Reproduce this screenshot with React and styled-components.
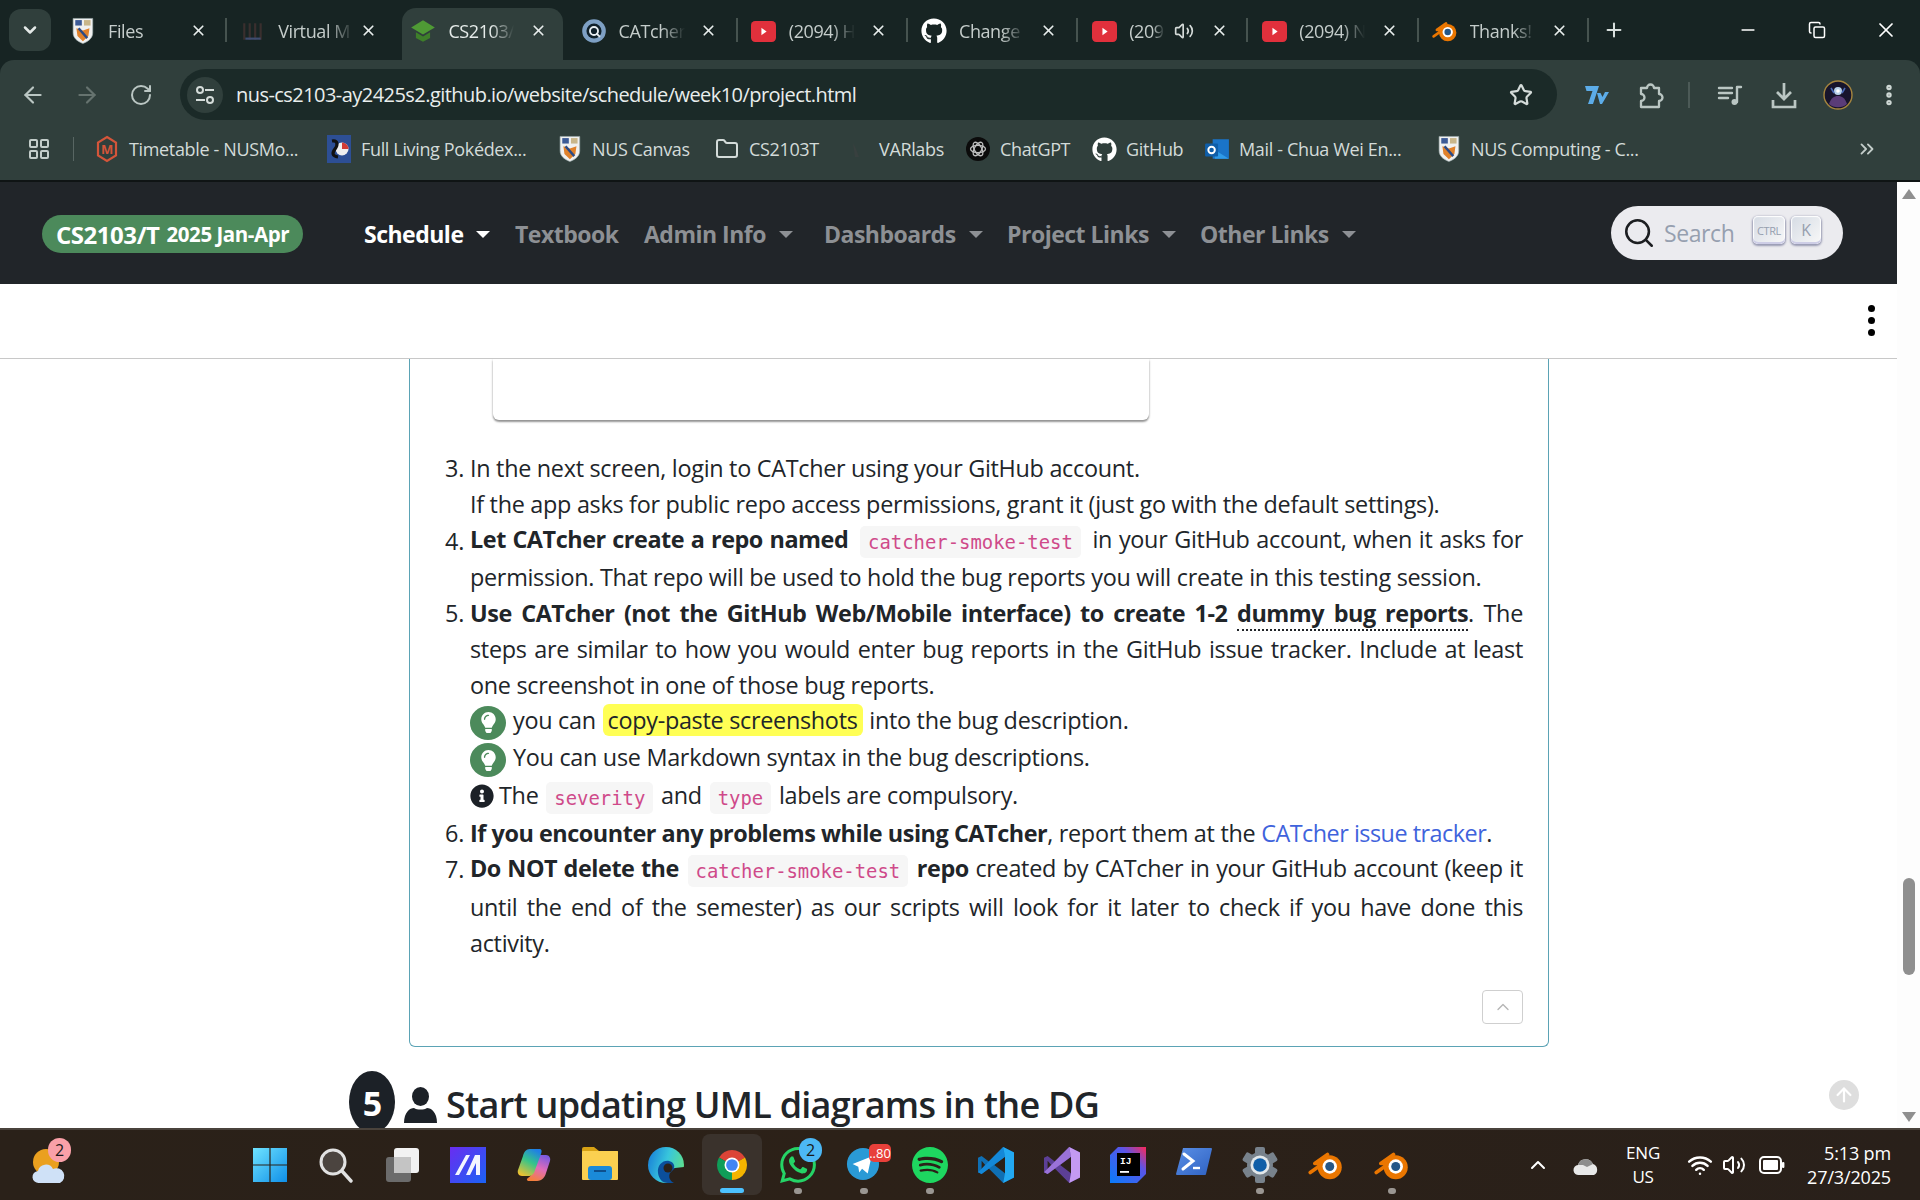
import React from 'react';
import styled, { createGlobalStyle } from 'styled-components';
import { ArrowLeft, ArrowRight, RotateCw, Star, X, Plus, Minus, ChevronDown, ChevronUp, ChevronsRight, EllipsisVertical, Folder, LayoutGrid, Search as SearchGlyph, Volume2, Wifi, ArrowUp, Copy } from 'lucide-react';
import { FaGithub, FaInfoCircle, FaLightbulb } from 'react-icons/fa';
import { SiSpotify, SiWhatsapp } from 'react-icons/si';

const UI_FONT = `"Open Sans", "Noto Sans", sans-serif`;

const GlobalStyle = createGlobalStyle`
    html, body {
        margin: 0;
        width: 1920px;
        height: 1200px;
        overflow: hidden;
        background: #fff;
        font-family: ${UI_FONT};
    }
    * { box-sizing: border-box; }
    svg { flex: none; }
`;

const Screen = styled.div`
    width: 1920px;
    height: 1200px;
    display: flex;
    flex-direction: column;
    overflow: hidden;
`;

/* ---------- browser chrome ---------- */
const Chrome = styled.div`
    height: 182px;
    flex: none;
    background: #172423;
    border-bottom: 2px solid #0f1414;
`;
const TabStrip = styled.div`
    height: 60px;
    display: flex;
    align-items: flex-start;
    padding-left: 9px;
`;
const TabSearch = styled.div`
    width: 42px;
    height: 42px;
    margin: 9px 6px 0 0;
    border-radius: 12px;
    background: #303f3c;
    color: #e4eae8;
    display: flex;
    align-items: center;
    justify-content: center;
`;
const Tab = styled.div`
    position: relative;
    width: 170.2px;
    height: 52px;
    margin-top: 8px;
    flex: none;
    display: flex;
    align-items: center;
    padding: 0 0 6px 17px;
    color: ${p => (p.$active ? '#e6ecea' : '#c5cdcb')};
    &::before {
        content: '';
        display: ${p => (p.$active ? 'block' : 'none')};
        position: absolute;
        left: 5px;
        right: 5px;
        top: 0;
        bottom: 0;
        background: #303f3c;
        border-radius: 14px 14px 0 0;
    }
    &::after {
        content: '';
        display: ${p => (p.$sep ? 'block' : 'none')};
        position: absolute;
        right: 0;
        top: 10px;
        width: 2px;
        height: 24px;
        background: #46534f;
    }
`;
const TabIcon = styled.span`
    position: relative;
    width: 18px;
    height: 24px;
    flex: none;
    display: flex;
    align-items: center;
    justify-content: center;
`;
const TabTitle = styled.span`
    position: relative;
    width: ${p => p.$w || 66}px;
    margin-left: 16px;
    flex: none;
    overflow: hidden;
    white-space: nowrap;
    font-size: 18px;
    letter-spacing: -0.4px;
    -webkit-mask-image: linear-gradient(90deg, #000 65%, transparent);
    mask-image: linear-gradient(90deg, #000 65%, transparent);
`;
const TabClose = styled.span`
    position: absolute;
    left: 131px;
    top: 12px;
    width: 20px;
    height: 20px;
    color: #e8edec;
    display: flex;
    align-items: center;
    justify-content: center;
`;
const TabAudio = styled.span`
    position: relative;
    margin-left: 9px;
    color: #d5dbd9;
    display: flex;
`;
const NewTab = styled.div`
    width: 30px;
    height: 60px;
    margin-left: 10px;
    color: #d8dfdd;
    display: flex;
    align-items: center;
    justify-content: center;
`;
const WindowButtons = styled.div`
    margin-left: auto;
    display: flex;
`;
const WindowButton = styled.div`
    width: 69px;
    height: 60px;
    color: #fff;
    display: flex;
    align-items: center;
    justify-content: center;
`;
const Toolbar = styled.div`
    background: #303f3c;
    border-radius: 14px 14px 0 0;
    height: 60px;
    display: flex;
    align-items: flex-start;
    padding-left: 6px;
`;
const ToolButton = styled.div`
    width: 54px;
    height: 51px;
    margin-top: 9px;
    flex: none;
    color: ${p => p.$color || '#bac6c3'};
    display: flex;
    align-items: center;
    justify-content: center;
`;
const MenuButton = styled(ToolButton)`
    margin-left: -3px;
`;
const NavGroup = styled.div`
    display: flex;
`;
const AddressBar = styled.div`
    width: 1377px;
    height: 51px;
    margin: 9px 13px 0 12px;
    flex: none;
    border-radius: 26px;
    background: #1b2a28;
    display: flex;
    align-items: center;
    padding-left: 7px;
`;
const SiteInfo = styled.div`
    width: 36px;
    height: 36px;
    border-radius: 50%;
    background: #303f3c;
    display: flex;
    align-items: center;
    justify-content: center;
`;
const Url = styled.span`
    margin-left: 13px;
    font-size: 20px;
    letter-spacing: -0.55px;
    color: #e9eeed;
    white-space: nowrap;
`;
const AddressStar = styled.div`
    margin-left: auto;
    margin-right: 24px;
    color: #d5dcda;
    display: flex;
`;
const ToolDivider = styled.div`
    width: 2px;
    height: 26px;
    margin: 22px 13px 0 10px;
    background: #4c5a57;
`;
const Bookmarks = styled.div`
    background: #303f3c;
    height: 60px;
    display: flex;
    align-items: center;
    padding: 0 0 2px 27px;
    position: relative;
`;
const AppsIcon = styled.div`
    width: 24px;
    color: #c3cdca;
    display: flex;
`;
const BookmarkDivider = styled.div`
    width: 1px;
    height: 24px;
    margin: 0 21px 0 22px;
    background: #586663;
`;
const Bookmark = styled.div`
    width: ${p => p.$w}px;
    flex: none;
    display: flex;
    align-items: center;
    gap: 10px;
    color: #d3dbd9;
    font-size: 18px;
    letter-spacing: -0.35px;
    white-space: nowrap;
`;
const BookmarkIcon = styled.span`
    width: 24px;
    height: 24px;
    flex: none;
    display: flex;
    align-items: center;
    justify-content: center;
`;
const MoreBookmarks = styled.div`
    margin-left: auto;
    margin-right: 42px;
    color: #c3cdca;
    display: flex;
`;

/* ---------- page ---------- */
const Body = styled.div`
    flex: 1;
    min-height: 0;
    display: flex;
`;
const Page = styled.div`
    position: relative;
    flex: 1;
    min-width: 0;
    display: flex;
    flex-direction: column;
`;
const Navbar = styled.nav`
    height: 102px;
    flex: none;
    background: #212529;
    display: flex;
    align-items: center;
    padding-left: 42px;
`;
const Brand = styled.div`
    width: 261px;
    height: 38px;
    margin-right: 61px;
    margin-top: 2px;
    flex: none;
    border-radius: 19px;
    background: #4c8a5b;
    color: #fff;
    font-weight: 700;
    font-size: 24px;
    letter-spacing: -0.45px;
    display: flex;
    align-items: center;
    justify-content: center;
    white-space: nowrap;
`;
const BrandSmall = styled.span`
    font-size: 20.5px;
    margin-left: 7px;
    letter-spacing: -0.45px;
`;
const NavItem = styled.div`
    width: ${p => p.$w}px;
    flex: none;
    display: flex;
    align-items: center;
    margin-top: 2px;
    font-size: 23px;
    font-weight: 700;
    letter-spacing: -0.5px;
    color: ${p => (p.$active ? '#fff' : '#8d9094')};
    white-space: nowrap;
`;
const Caret = styled.span`
    margin-left: 13px;
    width: 0;
    height: 0;
    border-left: 7px solid transparent;
    border-right: 7px solid transparent;
    border-top: 7px solid currentColor;
`;
const SearchPill = styled.div`
    margin-left: auto;
    margin-right: 54px;
    width: 232px;
    height: 54px;
    flex: none;
    border-radius: 27px;
    background: #ebebef;
    display: flex;
    align-items: center;
    padding-left: 11px;
    color: #969faf;
    font-size: 23px;
    letter-spacing: -0.4px;
`;
const SearchLabel = styled.span`
    margin-left: 8px;
    margin-right: 16px;
    width: 73px;
`;
const Key = styled.span`
    width: ${p => p.$w}px;
    height: 28px;
    margin-right: 6px;
    margin-top: -6px;
    border-radius: 5px;
    background: linear-gradient(-225deg, #d5dbe4, #f8f8f8);
    box-shadow: inset 0 -2px 0 0 #cdcde6, inset 0 0 1px 1px #fff, 0 1px 2px 1px rgba(30, 35, 90, 0.4);
    color: #969faf;
    font-size: ${p => p.$size}px;
    display: flex;
    align-items: center;
    justify-content: center;
`;
const SubBar = styled.div`
    height: 75px;
    flex: none;
    background: #fff;
    border-bottom: 1px solid #c8c8c8;
    display: flex;
    align-items: center;
    justify-content: flex-end;
    padding-right: 22px;
`;
const KebabDots = styled.div`
    display: flex;
    flex-direction: column;
    gap: 5px;
    margin-top: -2px;
`;
const KebabDot = styled.span`
    width: 7px;
    height: 7px;
    border-radius: 50%;
    background: #000;
`;
const Content = styled.div`
    flex: 1;
    min-height: 0;
    overflow: hidden;
    padding-left: 409px;
    color: #212529;
`;
const Panel = styled.section`
    width: 1140px;
    border: 1px solid #5ba3b5;
    border-top: 0;
    border-radius: 0 0 6px 6px;
    padding-right: 25px;
    display: flex;
    flex-direction: column;
`;
const ScreenshotCard = styled.div`
    width: 656px;
    height: 61px;
    margin-left: 83px;
    flex: none;
    border-radius: 0 0 6px 6px;
    background: #fff;
    box-shadow: 0 2px 2px rgba(0, 0, 0, 0.4), 0 0 3px rgba(0, 0, 0, 0.12);
`;
const Steps = styled.div`
    margin-top: 30px;
    display: flex;
    flex-direction: column;
`;
const Line = styled.div`
    display: flex;
    height: ${p => p.$h || 36.2}px;
    align-items: center;
    font-size: 23.4px;
    letter-spacing: -0.29px;
    white-space: nowrap;
`;
const Num = styled.span`
    width: 60px;
    flex: none;
    text-align: right;
    padding-right: 6px;
`;
const LineText = styled.div`
    flex: 1;
    min-width: 0;
    text-align: ${p => (p.$fill ? 'justify' : 'left')};
    text-align-last: ${p => (p.$fill ? 'justify' : 'left')};
    white-space: normal;
`;
const Strong = styled.b`
    font-weight: 700;
    letter-spacing: -0.45px;
`;
const Dotted = styled(Strong)`
    border-bottom: 2px dotted #212529;
`;
const Code = styled.code`
    display: inline-block;
    height: 32px;
    line-height: 32px;
    vertical-align: middle;
    margin: 0 ${p => (p.$tight ? 2 : 5)}px;
    padding: 0 8px;
    border-radius: 5px;
    background: #f6f6f6;
    color: #cf4a8a;
    font-family: "DejaVu Sans Mono", monospace;
    font-size: 18.9px;
    letter-spacing: 0;
`;
const Mark = styled.mark`
    display: inline-block;
    height: 32px;
    line-height: 32px;
    margin: 0 1px;
    padding: 0 5px;
    border-radius: 6px;
    background: #ffff55;
    color: #212529;
`;
const Tip = styled.span`
    display: inline-flex;
    vertical-align: middle;
    width: 36px;
    height: 34px;
    margin-right: 7px;
    border-radius: 50%;
    background: #4c8a5b;
    color: #fff;
    align-items: center;
    justify-content: center;
`;
const Info = styled.span`
    display: inline-flex;
    vertical-align: middle;
    margin-right: 5px;
    margin-top: -4px;
    color: #1c2127;
`;
const TrackerLink = styled.a`
    color: #3f63dc;
    letter-spacing: -0.5px;
`;
const CollapseButton = styled.div`
    width: 41px;
    height: 34px;
    margin: 29px 0 22px auto;
    flex: none;
    border: 1px solid #cfcfcf;
    border-radius: 4px;
    color: #b5b5b5;
    display: flex;
    align-items: center;
    justify-content: center;
`;
const StepHeading = styled.h2`
    margin: 24px 0 0 -60px;
    display: flex;
    align-items: flex-start;
    font-size: 36px;
    font-weight: 600;
    letter-spacing: -0.75px;
    line-height: 46px;
    white-space: nowrap;
`;
const StepBadge = styled.span`
    width: 46px;
    height: 62px;
    flex: none;
    border-radius: 50%;
    background: #1c2127;
    color: #fff;
    font-size: 34px;
    font-weight: 700;
    line-height: 64px;
    text-align: center;
`;
const StepPerson = styled.span`
    margin: 16px 9px 0 9px;
    display: flex;
    color: #1c2127;
`;
const StepTitle = styled.span`
    margin-top: 11px;
`;
const ScrollTop = styled.div`
    position: absolute;
    right: 38px;
    bottom: 18px;
    width: 30px;
    height: 30px;
    border-radius: 50%;
    background: #dedede;
    color: #fff;
    display: flex;
    align-items: center;
    justify-content: center;
`;
const Scrollbar = styled.div`
    width: 23px;
    flex: none;
    background: #fdfdfd;
    display: flex;
    flex-direction: column;
    align-items: center;
    padding: 7px 0 6px;
`;
const ArrowCap = styled.span`
    width: 0;
    height: 0;
    border-left: 7px solid transparent;
    border-right: 7px solid transparent;
    ${p => (p.$down ? 'border-top: 10px solid #8f8f8f; margin-top: auto;' : 'border-bottom: 10px solid #8f8f8f;')}
`;
const Thumb = styled.span`
    width: 12px;
    height: 97px;
    margin-top: 679px;
    border-radius: 6px;
    background: #8f8f8f;
`;

/* ---------- taskbar ---------- */
const Taskbar = styled.footer`
    height: 72px;
    flex: none;
    background: linear-gradient(90deg, #2a2119, #2c2118 45%, #29201a);
    border-top: 2px solid #4a433c;
    display: flex;
    align-items: center;
    color: #fff;
`;
const WeatherSlot = styled.div`
    width: 237px;
    flex: none;
    padding-left: 31px;
`;
const IconWrap = styled.div`
    position: relative;
    width: 36px;
    height: 36px;
`;
const Badge = styled.span`
    position: absolute;
    top: ${p => (p.$top === undefined ? -9 : p.$top)}px;
    right: ${p => p.$right || -6}px;
    min-width: ${p => p.$w || 23}px;
    height: ${p => p.$h || 24}px;
    border-radius: ${p => p.$radius || 12}px;
    background: ${p => p.$bg};
    color: ${p => p.$fg || '#1a1a1a'};
    font-size: ${p => p.$size || 16}px;
    text-align: center;
    line-height: ${p => p.$h || 24}px;
`;
const AppSlot = styled.div`
    position: relative;
    width: 66px;
    height: 70px;
    flex: none;
    display: flex;
    align-items: center;
    justify-content: center;
    &::before {
        content: '';
        display: ${p => (p.$active ? 'block' : 'none')};
        position: absolute;
        left: 3px;
        right: 3px;
        top: 4px;
        bottom: 5px;
        border-radius: 8px;
        background: #3a322c;
    }
    &::after {
        content: '';
        position: absolute;
        display: ${p => (p.$dot || p.$active ? 'block' : 'none')};
        bottom: ${p => (p.$active ? 7 : 6)}px;
        left: 50%;
        transform: translateX(-50%);
        width: ${p => (p.$active ? 24 : 8)}px;
        height: ${p => (p.$active ? 5 : 6)}px;
        border-radius: 4px;
        background: ${p => (p.$active ? '#4cc2ff' : '#9a9692')};
    }
`;
const Tray = styled.div`
    margin-left: auto;
    padding-right: 29px;
    display: flex;
    align-items: center;
`;
const TrayIcon = styled.div`
    width: ${p => p.$w}px;
    display: flex;
    justify-content: center;
    color: #fff;
`;
const TwoLines = styled.div`
    display: flex;
    flex-direction: column;
    gap: 4px;
    align-items: ${p => p.$align};
    font-size: 18px;
    line-height: 20px;
    letter-spacing: -0.15px;
    white-space: nowrap;
`;
const LangBlock = styled(TwoLines)`
    width: 66px;
    font-size: 17px;
`;
const ClockBlock = styled(TwoLines)`
    margin-left: 7px;
`;

/* ---------- drawn icons ---------- */
const Crest = ({ size = 28 }) => (
    <svg width={size * 0.78} height={size} viewBox="0 0 20 25">
        <path d="M1 1h18v13c0 5-4 8-9 10-5-2-9-5-9-10z" fill="#f0f0f0" stroke="#9aa" strokeWidth=".6" />
        <rect x="3" y="2.500" width="6" height="5" fill="#3c5a96" />
        <rect x="11" y="2.500" width="6" height="5" fill="#c9b68a" />
        <path d="M4 10l6 2 6-2-1 7-5 5-5-5z" fill="#e0812b" />
        <path d="M6 10l8 9" stroke="#2b4a86" strokeWidth="2.2" />
    </svg>
);
const Mortarboard = () => (
    <svg width="26" height="26" viewBox="0 0 22 22">
        <path d="M11 2l10 6-10 6L1 8z" fill="#4f9a35" />
        <path d="M5 12v5l6 3 6-3v-5l-6 3.600z" fill="#3e7f2a" />
    </svg>
);
const CatcherMark = () => (
    <svg width="26" height="26" viewBox="0 0 22 22">
        <circle cx="11" cy="11" r="10" fill="#7ea0c4" />
        <circle cx="11" cy="11" r="6.400" fill="#10202a" />
        <circle cx="11" cy="11" r="3.400" fill="none" stroke="#e8eef2" strokeWidth="1.600" />
        <path d="M13 13l3 3" stroke="#e8eef2" strokeWidth="1.600" />
    </svg>
);
const YoutubeMark = () => (
    <svg width="25" height="25" viewBox="0 0 24 24">
        <rect y="2" width="24" height="20" rx="4" fill="#e1303c" />
        <path d="M10 8.500l5 3.500-5 3.500z" fill="#fff" />
    </svg>
);
const BlenderMark = ({ size = 26 }) => (
    <svg width={size} height={size} viewBox="0 0 24 24">
        <path d="M1.500 17L10 11H4.500L13 5" stroke="#ea7600" strokeWidth="2.400" fill="none" strokeLinecap="round" strokeLinejoin="round" />
        <circle cx="14.500" cy="13.500" r="8" fill="#ea7600" />
        <circle cx="14.500" cy="13" r="4.800" fill="#fff" />
        <circle cx="14.500" cy="13" r="3" fill="#265787" />
    </svg>
);
const VirtualMark = () => (
    <svg width="24" height="24" viewBox="0 0 22 22">
        <path d="M2 4h2v15H2zM7 4h2v15H7zM12 4h2v15h-2zM17 4h2v15h-2z" fill="#3a2f2e" />
        <path d="M4 17h14v2H4z" fill="#3f4d70" />
    </svg>
);
const SiteInfoMark = () => (
    <svg width="22" height="22" viewBox="0 0 22 22" fill="none" stroke="#d5dcda" strokeWidth="2">
        <circle cx="6" cy="6" r="3" />
        <path d="M11 6h9" />
        <circle cx="16" cy="16" r="3" />
        <path d="M2 16h9" />
    </svg>
);
const NusModsMark = () => (
    <svg width="24" height="28" viewBox="0 0 24 28">
        <path d="M12 2l9 5.500v13L12 26l-9-5.500v-13z" fill="none" stroke="#d4553a" strokeWidth="2.200" />
        <text x="12" y="19" textAnchor="middle" fontSize="13" fontWeight="700" fill="#d4553a" fontFamily="Open Sans">M</text>
    </svg>
);
const PokedexMark = () => (
    <svg width="24" height="28" viewBox="0 0 24 28">
        <rect width="24" height="28" fill="#2d4f95" />
        <circle cx="15" cy="14" r="6.500" fill="#efefef" />
        <path d="M15 7.500a6.500 6.500 0 0 1 6.500 6.500H15z" fill="#d13b35" />
        <path d="M5 6c6-1 6 4 3 8s-3 7 3 8" stroke="#111" strokeWidth="3.200" fill="none" />
    </svg>
);
const VarlabsMark = () => (
    <svg width="24" height="24" viewBox="0 0 24 24">
        <path d="M8 6l2 14h4l-3-8z" fill="#38403f" />
    </svg>
);
const GptMark = () => (
    <svg width="24" height="26" viewBox="0 0 24 24">
        <circle cx="12" cy="12" r="12" fill="#0b0b0b" />
        {[0, 60, 120].map(a => (
            <ellipse key={a} cx="12" cy="12" rx="7.500" ry="3.600" fill="none" stroke="#bdbdbd" strokeWidth="1.300" transform={`rotate(${a} 12 12)`} />
        ))}
    </svg>
);
const OutlookMark = () => (
    <svg width="26" height="28" viewBox="0 0 24 24">
        <path d="M8 3h15v18H8z" fill="#1a74c8" />
        <path d="M10 13l13 8H10z" fill="#2f9be8" />
        <rect x="1" y="7" width="12" height="12" rx="1" fill="#0f5ea8" />
        <circle cx="7" cy="13" r="3" fill="none" stroke="#fff" strokeWidth="1.800" />
    </svg>
);
const SevenMark = () => (
    <svg width="24" height="18" viewBox="0 0 24 18">
        <path d="M0 0h14l-6 18H3L7.500 5H1.500z" fill="#5cace8" />
        <path d="M12 7h3.500l2 4 2.500-5h4L17 18h-2z" fill="#5cace8" />
    </svg>
);
const PuzzleMark = () => (
    <svg width="26" height="28" viewBox="0 0 26 28" fill="none" stroke="#bac6c3" strokeWidth="2.300" strokeLinejoin="round">
        <path d="M3 7h6a3.500 3.500 0 0 1 7 0h5v6a3.500 3.500 0 0 1 0 7v6H3v-6a3.500 3.500 0 0 0 0-7z" />
    </svg>
);
const MediaMark = () => (
    <svg width="26" height="26" viewBox="0 0 26 26" fill="none" stroke="#bac6c3" strokeWidth="2.400" strokeLinecap="round">
        <path d="M2 6h13M2 11h13M2 16h9" />
        <path d="M20 5h4M20 5v15" />
        <circle cx="17.500" cy="20" r="3" fill="#bac6c3" stroke="none" />
    </svg>
);
const DownloadMark = () => (
    <svg width="26" height="28" viewBox="0 0 26 28" fill="none" stroke="#bac6c3" strokeWidth="2.700">
        <path d="M13 2v15M6 11l7 7 7-7" />
        <path d="M2 19v7h22v-7" />
    </svg>
);
const AvatarMark = () => (
    <svg width="30" height="30" viewBox="0 0 30 30">
        <circle cx="15" cy="15" r="14" fill="#17142c" stroke="#a5853e" strokeWidth="1.400" />
        <path d="M6 24c2-6 5-8 9-8s7 2 9 8a14 14 0 0 1-18 0z" fill="#5a3c78" />
        <circle cx="15" cy="11" r="4" fill="#b9d2ea" />
        <circle cx="15" cy="11" r="1.800" fill="#fff" />
        <path d="M8 8l3 5M22 8l-3 5" stroke="#4a6ab8" strokeWidth="1.600" />
    </svg>
);
const PersonMark = () => (
    <svg width="33" height="36" viewBox="0 0 33 36">
        <ellipse cx="16.500" cy="9.500" rx="8.500" ry="9.500" fill="currentColor" />
        <path d="M0 36c0-11 6-15 10-15 3 2 10 2 13 0 4 0 10 4 10 15z" fill="currentColor" />
    </svg>
);
const WeatherMark = () => (
    <svg width="36" height="38" viewBox="0 0 36 38">
        <circle cx="15" cy="15" r="13" fill="#eaa01f" />
        <path d="M8 36a6 6 0 0 1-1-12 8 8 0 0 1 15-2 7 7 0 0 1 7 14z" fill="#cfe1f7" />
    </svg>
);
const WindowsMark = () => (
    <svg width="36" height="36" viewBox="0 0 36 36">
        <defs>
            <linearGradient id="win" x1="0" y1="0" x2="1" y2="1">
                <stop offset="0" stopColor="#6fe3ff" />
                <stop offset="1" stopColor="#0f8fe8" />
            </linearGradient>
        </defs>
        <path d="M1 1h16.400v16.400H1zM18.600 1H35v16.400H18.600zM1 18.600h16.400V35H1zM18.600 18.600H35V35H18.600z" fill="url(#win)" />
    </svg>
);
const TaskSearchMark = () => (
    <svg width="36" height="36" viewBox="0 0 36 36">
        <circle cx="15" cy="15" r="12" fill="#4b443f" stroke="#e2e2e2" strokeWidth="3" />
        <path d="M24 24l9 10" stroke="#e2e2e2" strokeWidth="3.400" strokeLinecap="round" />
    </svg>
);
const TaskViewMark = () => (
    <svg width="36" height="36" viewBox="0 0 36 36">
        <rect x="2" y="10" width="25" height="25" rx="3" fill="#6b6b6b" />
        <rect x="10" y="1" width="25" height="25" rx="3" fill="#f2f2f2" />
        <rect x="10" y="10" width="17" height="16" fill="#c4c4c4" />
    </svg>
);
const MlMark = () => (
    <svg width="36" height="36" viewBox="0 0 36 36">
        <defs>
            <linearGradient id="ml" x1="0" y1="0" x2="1" y2="1">
                <stop offset="0" stopColor="#6a2df0" />
                <stop offset="1" stopColor="#1a63f5" />
            </linearGradient>
        </defs>
        <rect width="36" height="36" fill="url(#ml)" />
        <path d="M5 28L16 8h4L9 28zM16 28L25 8h5v20h-4V16l-6 12z" fill="#f3f6ff" />
    </svg>
);
const CopilotMark = () => (
    <svg width="36" height="36" viewBox="0 0 36 36">
        <defs>
            <linearGradient id="co1" x1="0.700" y1="0" x2="0.200" y2="1">
                <stop offset="0" stopColor="#1f7fe6" />
                <stop offset=".45" stopColor="#35c48a" />
                <stop offset="1" stopColor="#f2c12e" />
            </linearGradient>
            <linearGradient id="co2" x1="0.700" y1="0" x2="0.300" y2="1">
                <stop offset="0" stopColor="#7b5be0" />
                <stop offset=".5" stopColor="#e06cb8" />
                <stop offset="1" stopColor="#f5803a" />
            </linearGradient>
        </defs>
        <path d="M24 8h6c3 0 5 3 4 6l-4 12c-1 4-4 8-9 8h-8c-2 0-3-2-1-3 3-2 4-4 5-7z" fill="url(#co2)" />
        <path d="M14 2h9c3 0 3 2 2 5l-6 16c-1 4-3 6-7 6H6c-3 0-5-3-4-6L7 9c1-4 3-7 7-7z" fill="url(#co1)" />
    </svg>
);
const ExplorerMark = () => (
    <svg width="36" height="33" viewBox="0 0 36 33">
        <path d="M0 2a2 2 0 0 1 2-2h10l5 4h19v8H0z" fill="#d8a214" />
        <rect y="4" width="36" height="29" rx="1" fill="#fbd050" />
        <rect x="6" y="19" width="24" height="14" rx="3" fill="#1a8ad8" />
        <rect x="12" y="23" width="12" height="2" fill="#0d4f8c" />
    </svg>
);
const EdgeMark = () => (
    <svg width="36" height="36" viewBox="0 0 36 36">
        <defs>
            <linearGradient id="edge" x1="0" y1="0.300" x2="1" y2="0.600">
                <stop offset="0" stopColor="#1a83d8" />
                <stop offset=".5" stopColor="#38c6dc" />
                <stop offset="1" stopColor="#5fe08a" />
            </linearGradient>
        </defs>
        <circle cx="18" cy="18" r="18" fill="url(#edge)" />
        <path d="M10 26c-1-8 5-13 11-12 4 1 6 4 5 7h10v15H20C14 36 11 32 10 26z" fill="#0b4f9c" />
        <path d="M27 21l9-1v16H26c-4-2-6-6-4-10z" fill="#2b2119" />
        <circle cx="20" cy="21" r="4.500" fill="#2b2119" />
    </svg>
);
const ChromeMark = () => (
    <svg width="36" height="36" viewBox="0 0 48 48">
        <path d="M24 24L6.680 14A20 20 0 0 1 41.320 14z" fill="#db4437" />
        <path d="M24 24L41.320 14A20 20 0 0 1 24 44z" fill="#f4b400" />
        <path d="M24 24L24 44A20 20 0 0 1 6.680 14z" fill="#0f9d58" />
        <circle cx="24" cy="24" r="10" fill="#fff" />
        <circle cx="24" cy="24" r="7.800" fill="#4285f4" />
    </svg>
);
const TelegramMark = () => (
    <svg width="34" height="34" viewBox="0 0 36 36">
        <circle cx="18" cy="18" r="17" fill="#2a9ad6" />
        <path d="M7 18l20-8-4 18-6-5-3 4-1-6z" fill="#fff" />
    </svg>
);
// VS Code and Visual Studio share the ribbon shape, only the colours differ
const RibbonMark = ({ back, mid, front }) => (
    <svg width="36" height="36" viewBox="0 0 100 100">
        <path fillRule="evenodd" d="M70 0L30 40 10 25 0 30v40l10 5 20-15 40 40 30-15V15zM75 27L45 50l30 23zM10 38l10 12-10 12z" fill={back} />
        <path fillRule="evenodd" d="M70 0L0 70l10 5L75 27z" fill={mid} />
        <path d="M70 0l30 15v70l-30 15 5-27V27z" fill={front} />
    </svg>
);
const IdeaMark = () => (
    <svg width="36" height="36" viewBox="0 0 36 36">
        <defs>
            <linearGradient id="idea" x1="0" y1="1" x2="1" y2="0">
                <stop offset="0" stopColor="#087cfa" />
                <stop offset=".65" stopColor="#5a55e8" />
                <stop offset="1" stopColor="#fe2857" />
            </linearGradient>
        </defs>
        <path d="M8 0h28v27l-9 9H0V8z" fill="url(#idea)" />
        <rect x="7" y="6" width="23" height="23" fill="#000" />
        <text x="10" y="17" fontSize="9.500" fontWeight="700" fill="#fff" fontFamily="Liberation Mono">IJ</text>
        <rect x="10" y="24" width="9" height="1.800" fill="#fff" />
    </svg>
);
const ShellMark = () => (
    <svg width="36" height="28" viewBox="0 0 36 28">
        <defs>
            <linearGradient id="shell" x1="0" y1="0" x2="1" y2="1">
                <stop offset="0" stopColor="#5a8fe6" />
                <stop offset="1" stopColor="#2f62c2" />
            </linearGradient>
        </defs>
        <path d="M7 1h28a1 1 0 0 1 1 1l-6 25a1 1 0 0 1-1 1H1a1 1 0 0 1-1-1z" fill="url(#shell)" />
        <path d="M8 7l9 7-10 8" stroke="#fff" strokeWidth="3" fill="none" strokeLinecap="round" />
        <path d="M17 21h7" stroke="#fff" strokeWidth="2.400" />
    </svg>
);
const GearMark = () => (
    <svg width="36" height="36" viewBox="0 0 36 36">
        {[0, 60, 120].map(a => (
            <rect key={a} x="13" y="0" width="10" height="36" rx="2" fill="#78828c" transform={`rotate(${a} 18 18)`} />
        ))}
        <circle cx="18" cy="18" r="13" fill="#78828c" />
        <circle cx="18" cy="18" r="9.500" fill="#e2e7ea" />
        <circle cx="18" cy="18" r="6.800" fill="#0f5ea8" />
    </svg>
);
const TrayCloud = () => (
    <svg width="26" height="22" viewBox="0 0 26 22">
        <path d="M6 21a5 5 0 0 1-1-10 8 8 0 0 1 15-1 6 6 0 0 1 1 11z" fill="#e8e8e8" />
        <path d="M5 11a8 8 0 0 1 15-1l-6 3-4-2z" fill="#8d8d8d" />
    </svg>
);
const TrayBattery = () => (
    <svg width="26" height="20" viewBox="0 0 26 20">
        <rect x="1" y="2" width="21" height="16" rx="4" fill="none" stroke="#fff" strokeWidth="2" />
        <rect x="4" y="5" width="15" height="10" rx="1" fill="#fff" />
        <rect x="23" y="7" width="2.400" height="6" rx="1" fill="#fff" />
    </svg>
);

/* ---------- data ---------- */
const TABS = [
    { title: 'Files', icon: <Crest />, sep: true },
    { title: 'Virtual M', icon: <VirtualMark />, w: 76 },
    { title: 'CS2103/', icon: <Mortarboard />, active: true },
    { title: 'CATcher', icon: <CatcherMark />, sep: true },
    { title: '(2094) H', icon: <YoutubeMark />, sep: true },
    { title: 'Change', icon: <FaGithub size={26} color="#fff" />, sep: true },
    { title: '(209', icon: <YoutubeMark />, sep: true, w: 36, audio: true },
    { title: '(2094) N', icon: <YoutubeMark />, sep: true },
    { title: 'Thanks!', icon: <BlenderMark />, sep: true },
];

const BOOKMARKS = [
    { label: 'Timetable - NUSMo...', icon: <NusModsMark />, w: 232 },
    { label: 'Full Living Pokédex...', icon: <PokedexMark />, w: 231 },
    { label: 'NUS Canvas', icon: <Crest />, w: 157 },
    { label: 'CS2103T', icon: <Folder size={24} color="#d3dbd9" />, w: 130 },
    { label: 'VARlabs', icon: <VarlabsMark />, w: 121 },
    { label: 'ChatGPT', icon: <GptMark />, w: 126 },
    { label: 'GitHub', icon: <FaGithub size={25} color="#fff" />, w: 113 },
    { label: 'Mail - Chua Wei En...', icon: <OutlookMark />, w: 232 },
    { label: 'NUS Computing - C...', icon: <Crest />, w: 232 },
];

const NAV_ITEMS = [
    { label: 'Schedule', w: 151, caret: true, active: true },
    { label: 'Textbook', w: 129 },
    { label: 'Admin Info', w: 180, caret: true },
    { label: 'Dashboards', w: 183, caret: true },
    { label: 'Project Links', w: 193, caret: true },
    { label: 'Other Links', w: 160, caret: true },
];

const APPS = [
    { icon: <WindowsMark /> },
    { icon: <TaskSearchMark /> },
    { icon: <TaskViewMark /> },
    { icon: <MlMark /> },
    { icon: <CopilotMark /> },
    { icon: <ExplorerMark /> },
    { icon: <EdgeMark /> },
    { icon: <ChromeMark />, active: true },
    { icon: <SiWhatsapp size={36} color="#25d366" />, dot: true, badge: { text: '2', bg: '#4cb8f5', right: -6 } },
    { icon: <TelegramMark />, dot: true, badge: { text: '..80', bg: '#e8403a', fg: '#fff', size: 13, w: 22, h: 18, top: -3, radius: 5, right: -9 } },
    { icon: <SiSpotify size={36} color="#1ed760" />, dot: true },
    { icon: <RibbonMark back="#0f6fb4" mid="#1488d8" front="#23a9f2" /> },
    { icon: <RibbonMark back="#5c3f96" mid="#9a72d8" front="#c49af2" /> },
    { icon: <IdeaMark /> },
    { icon: <ShellMark /> },
    { icon: <GearMark />, dot: true },
    { icon: <BlenderMark size={36} /> },
    { icon: <BlenderMark size={36} />, dot: true },
];

const BrowserChrome = () => (
    <Chrome>
        <TabStrip>
            <TabSearch><ChevronDown size={20} strokeWidth={3} /></TabSearch>
            {TABS.map(tab => (
                <Tab key={tab.title} $active={tab.active} $sep={tab.sep}>
                    <TabIcon>{tab.icon}</TabIcon>
                    <TabTitle $w={tab.w}>{tab.title}</TabTitle>
                    {tab.audio && <TabAudio><Volume2 size={20} /></TabAudio>}
                    <TabClose><X size={17} strokeWidth={2.4} /></TabClose>
                </Tab>
            ))}
            <NewTab><Plus size={22} strokeWidth={2.2} /></NewTab>
            <WindowButtons>
                <WindowButton><Minus size={20} strokeWidth={2} /></WindowButton>
                <WindowButton><Copy size={18} strokeWidth={2} /></WindowButton>
                <WindowButton><X size={24} strokeWidth={1.7} /></WindowButton>
            </WindowButtons>
        </TabStrip>
        <Toolbar>
            <NavGroup>
                <ToolButton><ArrowLeft size={26} /></ToolButton>
                <ToolButton $color="#66736f"><ArrowRight size={26} /></ToolButton>
                <ToolButton><RotateCw size={24} /></ToolButton>
            </NavGroup>
            <AddressBar>
                <SiteInfo><SiteInfoMark /></SiteInfo>
                <Url>nus-cs2103-ay2425s2.github.io/website/schedule/week10/project.html</Url>
                <AddressStar><Star size={24} strokeWidth={2.2} /></AddressStar>
            </AddressBar>
            <ToolButton><SevenMark /></ToolButton>
            <ToolButton><PuzzleMark /></ToolButton>
            <ToolDivider />
            <ToolButton><MediaMark /></ToolButton>
            <ToolButton><DownloadMark /></ToolButton>
            <ToolButton><AvatarMark /></ToolButton>
            <MenuButton $color="#cfd8d5"><EllipsisVertical size={26} strokeWidth={3} /></MenuButton>
        </Toolbar>
        <Bookmarks>
            <AppsIcon><LayoutGrid size={24} /></AppsIcon>
            <BookmarkDivider />
            {BOOKMARKS.map(item => (
                <Bookmark key={item.label} $w={item.w}>
                    <BookmarkIcon>{item.icon}</BookmarkIcon>
                    {item.label}
                </Bookmark>
            ))}
            <MoreBookmarks><ChevronsRight size={22} /></MoreBookmarks>
        </Bookmarks>
    </Chrome>
);

const SiteNav = () => (
    <Navbar>
        <Brand>CS2103/T<BrandSmall>2025 Jan-Apr</BrandSmall></Brand>
        {NAV_ITEMS.map(item => (
            <NavItem key={item.label} $w={item.w} $active={item.active}>
                {item.label}
                {item.caret && <Caret />}
            </NavItem>
        ))}
        <SearchPill>
            <SearchGlyph size={34} color="#1c1e21" strokeWidth={1.8} />
            <SearchLabel>Search</SearchLabel>
            <Key $w={32} $size={11}>CTRL</Key>
            <Key $w={30} $size={16}>K</Key>
        </SearchPill>
    </Navbar>
);

const ProjectSteps = () => (
    <Panel>
        <ScreenshotCard />
        <Steps>
            <Line $h={35.5}><Num>3.</Num><LineText>In the next screen, login to CATcher using your GitHub account.</LineText></Line>
            <Line $h={36.7}><Num /><LineText>If the app asks for public repo access permissions, grant it (just go with the default settings).</LineText></Line>
            <Line $h={36.7}><Num>4.</Num><LineText $fill><Strong>Let CATcher create a repo named</Strong> <Code>catcher-smoke-test</Code> in your GitHub account, when it asks for</LineText></Line>
            <Line $h={35.6}><Num /><LineText>permission. That repo will be used to hold the bug reports you will create in this testing session.</LineText></Line>
            <Line $h={36.7}><Num>5.</Num><LineText $fill><Strong>Use CATcher (not the GitHub Web/Mobile interface) to create 1-2</Strong> <Dotted>dummy bug reports</Dotted>. The</LineText></Line>
            <Line $h={35.5}><Num /><LineText $fill>steps are similar to how you would enter bug reports in the GitHub issue tracker. Include at least</LineText></Line>
            <Line $h={36.7}><Num /><LineText>one screenshot in one of those bug reports.</LineText></Line>
            <Line $h={36.8}><Num /><LineText><Tip><FaLightbulb size={21} /></Tip>you can <Mark>copy-paste screenshots</Mark> into the bug description.</LineText></Line>
            <Line $h={38}><Num /><LineText><Tip><FaLightbulb size={21} /></Tip>You can use Markdown syntax in the bug descriptions.</LineText></Line>
            <Line $h={36.7}><Num /><LineText><Info><FaInfoCircle size={24} /></Info>The <Code $tight>severity</Code> and <Code $tight>type</Code> labels are compulsory.</LineText></Line>
            <Line $h={35.5}><Num>6.</Num><LineText><Strong>If you encounter any problems while using CATcher</Strong>, report them at the <TrackerLink>CATcher issue tracker</TrackerLink>.</LineText></Line>
            <Line $h={37.8}><Num>7.</Num><LineText $fill><Strong>Do NOT delete the</Strong> <Code $tight>catcher-smoke-test</Code> <Strong>repo</Strong> created by CATcher in your GitHub account (keep it</LineText></Line>
            <Line $h={36.9}><Num /><LineText $fill>until the end of the semester) as our scripts will look for it later to check if you have done this</LineText></Line>
            <Line $h={36}><Num /><LineText>activity.</LineText></Line>
        </Steps>
        <CollapseButton><ChevronUp size={20} strokeWidth={1.6} /></CollapseButton>
    </Panel>
);

const WindowsTaskbar = () => (
    <Taskbar>
        <WeatherSlot>
            <IconWrap>
                <WeatherMark />
                <Badge $bg="#f9a0a8" $right={-4}>2</Badge>
            </IconWrap>
        </WeatherSlot>
        {APPS.map((app, i) => (
            <AppSlot key={i} $active={app.active} $dot={app.dot}>
                <IconWrap>
                    {app.icon}
                    {app.badge && (
                        <Badge
                            $bg={app.badge.bg}
                            $fg={app.badge.fg}
                            $size={app.badge.size}
                            $w={app.badge.w}
                            $h={app.badge.h}
                            $top={app.badge.top}
                            $radius={app.badge.radius}
                            $right={app.badge.right}
                        >
                            {app.badge.text}
                        </Badge>
                    )}
                </IconWrap>
            </AppSlot>
        ))}
        <Tray>
            <TrayIcon $w={48}><ChevronUp size={24} strokeWidth={2} /></TrayIcon>
            <TrayIcon $w={48}><TrayCloud /></TrayIcon>
            <LangBlock $align="center"><span>ENG</span><span>US</span></LangBlock>
            <TrayIcon $w={48}><Wifi size={26} strokeWidth={2.3} /></TrayIcon>
            <TrayIcon $w={20}><Volume2 size={24} /></TrayIcon>
            <TrayIcon $w={56}><TrayBattery /></TrayIcon>
            <ClockBlock $align="flex-end"><span>5:13 pm</span><span>27/3/2025</span></ClockBlock>
        </Tray>
    </Taskbar>
);

const App = () => (
    <Screen>
        <GlobalStyle />
        <BrowserChrome />
        <Body>
            <Page>
                <SiteNav />
                <SubBar>
                    <KebabDots><KebabDot /><KebabDot /><KebabDot /></KebabDots>
                </SubBar>
                <Content>
                    <ProjectSteps />
                    <StepHeading>
                        <StepBadge>5</StepBadge>
                        <StepPerson><PersonMark /></StepPerson>
                        <StepTitle>Start updating UML diagrams in the DG</StepTitle>
                    </StepHeading>
                </Content>
                <ScrollTop><ArrowUp size={22} strokeWidth={2.4} /></ScrollTop>
            </Page>
            <Scrollbar>
                <ArrowCap />
                <Thumb />
                <ArrowCap $down />
            </Scrollbar>
        </Body>
        <WindowsTaskbar />
    </Screen>
);

export default App;
